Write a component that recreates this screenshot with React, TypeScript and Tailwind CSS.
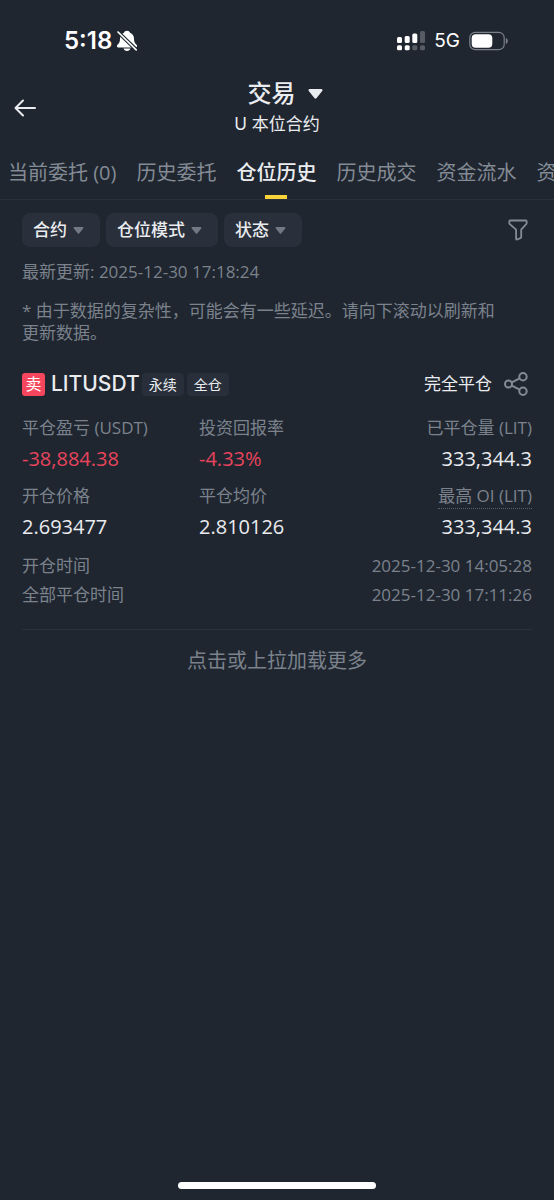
import type { ReactNode } from "react";

const tabs = ["当前委托 (0)", "历史委托", "仓位历史", "历史成交", "资金流水", "资金费用"];

const filters = [
  { id: "contract", label: "合约" },
  { id: "mode", label: "仓位模式" },
  { id: "status", label: "状态" },
];

type StatProps = {
  label: string;
  value: string;
  loss?: boolean;
  right?: boolean;
  dotted?: boolean;
};

function Caret({ className }: { className: string }) {
  return (
    <svg viewBox="0 0 16 11" fill="currentColor" className={className} aria-hidden="true">
      <path d="M1.6 0h12.8c1.2 0 1.8 1.3 1 2.2L9 10.1c-.6.7-1.4.7-2 0L.6 2.2C-.2 1.3.4 0 1.6 0z" />
    </svg>
  );
}

function StatusBar() {
  return (
    <div className="flex h-[76px] items-center justify-between pt-[6px] pl-16 pr-[46px] font-[Inter,sans-serif] text-white">
      <div className="flex items-center gap-1">
        <span className="text-2xl font-semibold">5:18</span>
        {/* Muted bell */}
        <svg viewBox="0 0 22 22" className="size-[22px]" aria-hidden="true">
          <path
            d="M11 .8c-1.600 0-2.700.8-3 2C5.300 3.800 4 6 4 8.600c0 3.300-.8 4.600-2.300 5.900-1.400 1.300-.8 2.900.7 2.900h17.200c1.500 0 2.100-1.600.7-2.900C18.800 13.200 18 11.900 18 8.600c0-2.600-1.300-4.800-4-5.800-.3-1.200-1.400-2-3-2zM7.500 18.500c.4 1.600 1.800 2.500 3.500 2.500s3.100-.9 3.500-2.500z"
            fill="currentColor"
          />
          <path d="M1.800 1.800 20.400 19.800" stroke="#1f2630" strokeWidth="3.800" />
          <path d="M2 2 20.200 19.900" stroke="currentColor" strokeWidth="1.700" strokeLinecap="round" />
        </svg>
      </div>
      <div className="flex items-center gap-[9px]">
        {/* Dual SIM signal */}
        <svg viewBox="0 0 28 20" fill="currentColor" className="h-5 w-7" aria-hidden="true">
          <rect x="0" y="6" width="5" height="6" rx="1.500" />
          <rect x="7.700" y="5" width="5" height="7" rx="1.500" />
          <rect x="15.300" y="2.500" width="5" height="9.500" rx="1.500" />
          <rect x="23" y="0" width="5" height="12" rx="1.500" opacity=".25" />
          <rect x="0" y="14.200" width="5" height="5" rx="1.500" />
          <rect x="7.700" y="14.200" width="5" height="5" rx="1.500" />
          <rect x="15.300" y="14.200" width="5" height="5" rx="1.500" opacity=".25" />
          <rect x="23" y="14.200" width="5" height="5" rx="1.500" opacity=".25" />
        </svg>
        <span className="text-[19px]">5G</span>
        {/* Battery */}
        <svg viewBox="0 0 39 20" className="h-5 w-[39px]" aria-hidden="true">
          <rect x=".8" y="1.300" width="34.400" height="17.400" rx="5.500" fill="none" stroke="#7b8087" strokeWidth="1.200" />
          <rect x="2.700" y="3.200" width="20.600" height="13.600" rx="4" fill="currentColor" />
          <path d="M36.800 7v6c1.300-.5 2-1.600 2-3s-.7-2.500-2-3z" fill="#7b8087" />
        </svg>
      </div>
    </div>
  );
}

function Header() {
  return (
    <header className="grid h-16 grid-cols-[52px_1fr_52px] items-center font-[Inter,'Noto_Sans_CJK_SC',sans-serif]">
      <button type="button" aria-label="返回" className="flex h-12 items-center pl-[14px]">
        <svg
          viewBox="0 0 22 18"
          fill="none"
          stroke="currentColor"
          strokeWidth="2"
          strokeLinecap="round"
          strokeLinejoin="round"
          className="h-[18px] w-[22px]"
          aria-hidden="true"
        >
          <path d="M21 9H2M9 1.500 1.500 9 9 16.500" />
        </svg>
      </button>
      <div className="flex flex-col items-center">
        <button type="button" className="flex items-center gap-3 pl-4 text-2xl leading-8 font-medium">
          交易
          <Caret className="h-[10px] w-[15px]" />
        </button>
        <p className="text-[17px] leading-7">U 本位合约</p>
      </div>
    </header>
  );
}

function Tabs() {
  return (
    <nav className="mt-[6px] flex h-[54px] gap-5 overflow-hidden border-b border-[#2a313b] pl-2 text-xl leading-[54px] whitespace-nowrap">
      {tabs.map((tab) =>
        tab === "仓位历史" ? (
          <a key={tab} href="#" aria-current="page" className="flex shrink-0 flex-col items-center font-medium">
            <span className="h-[49px]">{tab}</span>
            <span className="h-1 w-[22px] bg-[#f8d33a]" />
          </a>
        ) : (
          <a key={tab} href="#" className="shrink-0 text-[#848b95]">
            {tab}
          </a>
        )
      )}
    </nav>
  );
}

function Filters() {
  return (
    <div className="flex items-center gap-[6px]">
      {filters.map((f) => (
        <div key={f.id} className="relative">
          <select
            id={f.id}
            aria-label={f.label}
            className="h-[34px] appearance-none rounded-lg bg-[#29303b] pr-[33px] pl-[11px] text-[17px] leading-[34px] font-medium"
          >
            <option>{f.label}</option>
          </select>
          <Caret className="pointer-events-none absolute top-[14px] right-4 h-[7px] w-[11px] text-[#717985]" />
        </div>
      ))}
      <button type="button" aria-label="筛选" className="ml-auto pr-1 text-[#848b95]">
        <svg
          viewBox="0 0 20 22"
          fill="none"
          stroke="currentColor"
          strokeWidth="1.800"
          strokeLinejoin="round"
          className="h-[22px] w-5"
          aria-hidden="true"
        >
          <path d="M2.200 1.500h15.600c.6 0 .9.500.9 1v1.300c0 .5-.2.900-.5 1.300l-5 5.600v7.300c0 .6-.3 1-.8 1.200l-3.200 1.300c-.6.2-1.100-.1-1.100-.7v-9.100L1.800 5.100c-.3-.4-.5-.8-.5-1.300V2.500c0-.5.3-1 .9-1z" />
        </svg>
      </button>
    </div>
  );
}

function Tag({ children }: { children: ReactNode }) {
  return <span className="rounded bg-[#282f3a] px-[7px] text-sm leading-[23px]">{children}</span>;
}

function Stat({ label, value, loss, right, dotted }: StatProps) {
  return (
    <div className={right ? "text-right" : ""}>
      <dt className="h-6 text-[17px] leading-6 text-[#7b828c]">
        <span className={dotted ? "inline-block border-b border-dotted border-[#59616c]" : ""}>{label}</span>
      </dt>
      <dd className={loss ? "mt-1 text-xl leading-[30px] text-[#e8445c]" : "mt-1 text-xl leading-[30px]"}>{value}</dd>
    </div>
  );
}

function Position() {
  return (
    <article className="mt-[26px] border-b border-[#2a313b] pb-5">
      <div className="flex h-7 items-center">
        <span className="w-[23px] rounded-[3px] bg-[#f6465d] text-center text-base leading-[23px] text-white">卖</span>
        <h2 className="ml-[6px] font-[Inter,sans-serif] text-[21px] font-medium">LITUSDT</h2>
        <div className="ml-0.5 flex gap-[3px]">
          <Tag>永续</Tag>
          <Tag>全仓</Tag>
        </div>
        <span className="ml-auto text-[17px]">完全平仓</span>
        <button type="button" aria-label="分享" className="mr-1 ml-3 text-[#848b95]">
          <svg
            viewBox="0 0 24 24"
            fill="none"
            stroke="currentColor"
            strokeWidth="2"
            className="size-6"
            aria-hidden="true"
          >
            <circle cx="4.500" cy="12" r="3.500" />
            <circle cx="19" cy="4.700" r="3.700" />
            <circle cx="19" cy="19.300" r="3.700" />
            <path d="m7.700 10.400 8-4M7.700 13.600l8 4" />
          </svg>
        </button>
      </div>

      <dl className="mt-[18px] grid grid-cols-[177px_1fr_1fr] gap-y-[10px]">
        <Stat label="平仓盈亏 (USDT)" value="-38,884.38" loss />
        <Stat label="投资回报率" value="-4.33%" loss />
        <Stat label="已平仓量 (LIT)" value="333,344.3" right />
        <Stat label="开仓价格" value="2.693477" />
        <Stat label="平仓均价" value="2.810126" />
        <Stat label="最高 OI (LIT)" value="333,344.3" right dotted />
      </dl>

      <dl className="mt-[9px] text-[17px] leading-[29px] text-[#7b828c]">
        <div className="flex justify-between">
          <dt>开仓时间</dt>
          <dd>2025-12-30 14:05:28</dd>
        </div>
        <div className="flex justify-between">
          <dt>全部平仓时间</dt>
          <dd>2025-12-30 17:11:26</dd>
        </div>
      </dl>
    </article>
  );
}

export default function App() {
  return (
    <div className="flex min-h-screen flex-col bg-[#1f2630] font-['Open_Sans','Noto_Sans_CJK_SC',sans-serif] text-[#eaecef]">
      <StatusBar />
      <Header />
      <Tabs />
      <main className="px-[22px] pt-[13px]">
        <Filters />
        <div className="mt-[14px] text-[17px] leading-[22px] text-[#7b828c]">
          <p>最新更新: 2025-12-30 17:18:24</p>
          <p className="mt-[17px] max-w-[480px]">
            * 由于数据的复杂性，可能会有一些延迟。请向下滚动以刷新和更新数据。
          </p>
        </div>
        <Position />
        <button type="button" className="mt-[15px] w-full text-xl leading-8 text-[#7b828c]">
          点击或上拉加载更多
        </button>
      </main>
      <div className="mt-auto flex justify-center pb-[11px]">
        <div className="h-[7px] w-[198px] rounded-full bg-white" />
      </div>
    </div>
  );
}
